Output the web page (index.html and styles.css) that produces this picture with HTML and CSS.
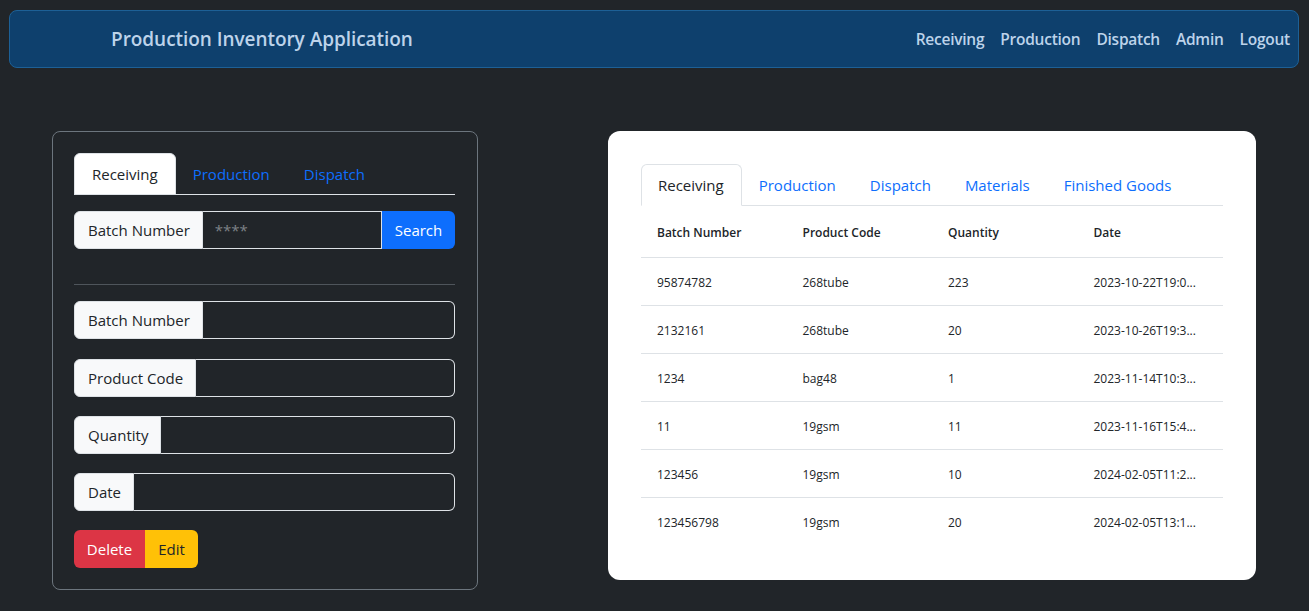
FILE: index.html
```html
<!DOCTYPE html>
<html lang="en">
<head>
<meta charset="utf-8">
<title>Production Inventory Application</title>
<link rel="stylesheet" href="styles.css">
</head>
<body>
<div class="page">
  <nav class="navbar">
    <span class="brand">Production Inventory Application</span>
    <ul class="nav-links">
      <li><a href="#">Receiving</a></li>
      <li><a href="#">Production</a></li>
      <li><a href="#">Dispatch</a></li>
      <li><a href="#">Admin</a></li>
      <li><a href="#">Logout</a></li>
    </ul>
  </nav>

  <main class="main">
    <section class="form-card">
      <ul class="tabs tabs-dark">
        <li class="tab active">Receiving</li>
        <li class="tab">Production</li>
        <li class="tab">Dispatch</li>
      </ul>
      <div class="input-group search-group">
        <span class="ig-label">Batch Number</span>
        <input class="ig-input" type="text" placeholder="****">
        <button class="btn btn-primary ig-btn">Search</button>
      </div>
      <hr class="divider">
      <div class="input-group field first">
        <span class="ig-label">Batch Number</span>
        <input class="ig-input ig-last" type="text">
      </div>
      <div class="input-group field">
        <span class="ig-label">Product Code</span>
        <input class="ig-input ig-last" type="text">
      </div>
      <div class="input-group field">
        <span class="ig-label">Quantity</span>
        <input class="ig-input ig-last" type="text">
      </div>
      <div class="input-group field">
        <span class="ig-label">Date</span>
        <input class="ig-input ig-last" type="text">
      </div>
      <div class="btn-group">
        <button class="btn btn-danger">Delete</button>
        <button class="btn btn-warning">Edit</button>
      </div>
    </section>

    <section class="table-card">
      <ul class="tabs tabs-light">
        <li class="tab active">Receiving</li>
        <li class="tab">Production</li>
        <li class="tab">Dispatch</li>
        <li class="tab">Materials</li>
        <li class="tab">Finished Goods</li>
      </ul>
      <table class="data-table">
        <thead>
          <tr><th>Batch Number</th><th>Product Code</th><th>Quantity</th><th>Date</th></tr>
        </thead>
        <tbody>
          <tr><td>95874782</td><td>268tube</td><td>223</td><td>2023-10-22T19:0...</td></tr>
          <tr><td>2132161</td><td>268tube</td><td>20</td><td>2023-10-26T19:3...</td></tr>
          <tr><td>1234</td><td>bag48</td><td>1</td><td>2023-11-14T10:3...</td></tr>
          <tr><td>11</td><td>19gsm</td><td>11</td><td>2023-11-16T15:4...</td></tr>
          <tr><td>123456</td><td>19gsm</td><td>10</td><td>2024-02-05T11:2...</td></tr>
          <tr class="last"><td>123456798</td><td>19gsm</td><td>20</td><td>2024-02-05T13:1...</td></tr>
        </tbody>
      </table>
    </section>
  </main>
</div>
</body>
</html>
```

FILE: styles.css
```css
* { box-sizing: border-box; }

html, body {
  margin: 0;
  padding: 0;
  background: #212529;
  font-family: "Open Sans", "Noto Sans", "Liberation Sans", sans-serif;
  color: #dee2e6;
}

.page {
  padding: 10px 10px 20px 9px;
}

.navbar {
  display: flex;
  align-items: center;
  justify-content: space-between;
  height: 58px;
  background: #0e406d;
  border: 1px solid #1d6096;
  border-radius: 8px;
  padding: 0 8px 0 101px;
}

.brand {
  font-size: 19px;
  font-weight: 600;
  color: #bdd3ea;
  letter-spacing: -0.05px;
}

.nav-links {
  display: flex;
  list-style: none;
  margin: 0;
  padding: 0;
  gap: 16px;
}

.nav-links a {
  color: #bdd3ea;
  text-decoration: none;
  font-weight: 600;
  font-size: 15.5px;
  letter-spacing: -0.25px;
}

.main {
  display: flex;
  justify-content: space-between;
  align-items: flex-start;
  padding: 63px 43px 0 43px;
}

/* Left form card */
.form-card {
  width: 426px;
  border: 1px solid #6c757d;
  border-radius: 8px;
  padding: 21px 22px 21px 21px;
}

.tabs {
  display: flex;
  list-style: none;
  margin: 0;
  padding: 0;
}

.tab {
  padding: 8px 16px;
  font-size: 15px;
  line-height: 24px;
  color: #0d6efd;
  border: 1px solid transparent;
  border-top-left-radius: 6px;
  border-top-right-radius: 6px;
  margin-bottom: -1px;
}

.tabs-dark {
  border-bottom: 1px solid #dee2e6;
}

.tabs-dark .tab.active {
  background: #ffffff;
  color: #212529;
  border-color: #dee2e6;
  padding: 8px 17px;
}

.tabs-light {
  border-bottom: 1px solid #dee2e6;
}

.tabs-light .tab.active {
  background: #ffffff;
  color: #212529;
  border-color: #dee2e6 #dee2e6 #ffffff;
  padding: 8px 17px 8px 16px;
}

.input-group {
  display: flex;
  height: 38px;
}

.search-group {
  margin-top: 16px;
}

.ig-label {
  display: flex;
  align-items: center;
  padding: 0 12px 0 13px;
  background: #f8f9fa;
  color: #212529;
  font-size: 15px;
  border: 1px solid #dee2e6;
  border-radius: 6px 0 0 6px;
  white-space: nowrap;
}

.ig-input {
  flex: 1;
  min-width: 0;
  background: #212529;
  border: 1px solid #dee2e6;
  border-left: none;
  color: #dee2e6;
  font-family: inherit;
  font-size: 15px;
  padding: 0 12px;
  outline: none;
}

.ig-input::placeholder {
  color: #7d8186;
}

.ig-last {
  border-radius: 0 6px 6px 0;
}

.btn {
  border: none;
  font-family: inherit;
  font-size: 15px;
  height: 38px;
  padding: 0 12px;
  cursor: pointer;
}

.ig-btn {
  width: 73px;
  border-radius: 0 6px 6px 0;
}

.btn-primary {
  background: #0d6efd;
  color: #ffffff;
}

.divider {
  border: none;
  border-top: 1px solid #4f555b;
  margin: 35px 0 16px;
}

.field {
  margin-bottom: 19px;
}

.field.first {
  margin-bottom: 20px;
}

.btn-group {
  display: flex;
}

.btn-danger {
  background: #dc3545;
  color: #ffffff;
  width: 71px;
  border-radius: 6px 0 0 6px;
}

.btn-warning {
  background: #ffc107;
  color: #212529;
  width: 53px;
  border-radius: 0 6px 6px 0;
}

/* Right table card */
.table-card {
  width: 648px;
  background: #ffffff;
  border-radius: 12px;
  padding: 33px;
}

.data-table {
  width: 100%;
  border-collapse: collapse;
  table-layout: fixed;
  color: #212529;
  font-size: 12px;
}

.data-table th,
.data-table td {
  text-align: left;
  white-space: nowrap;
  border-bottom: 1px solid #dee2e6;
  line-height: 18px;
}

.data-table th {
  font-weight: 600;
  padding: 18px 16px 15px 16px;
}

.data-table td {
  font-weight: 400;
  padding: 16px 16px 13px 16px;
}

.data-table tr.last td {
  border-bottom: none;
  padding-bottom: 15px;
}
```
